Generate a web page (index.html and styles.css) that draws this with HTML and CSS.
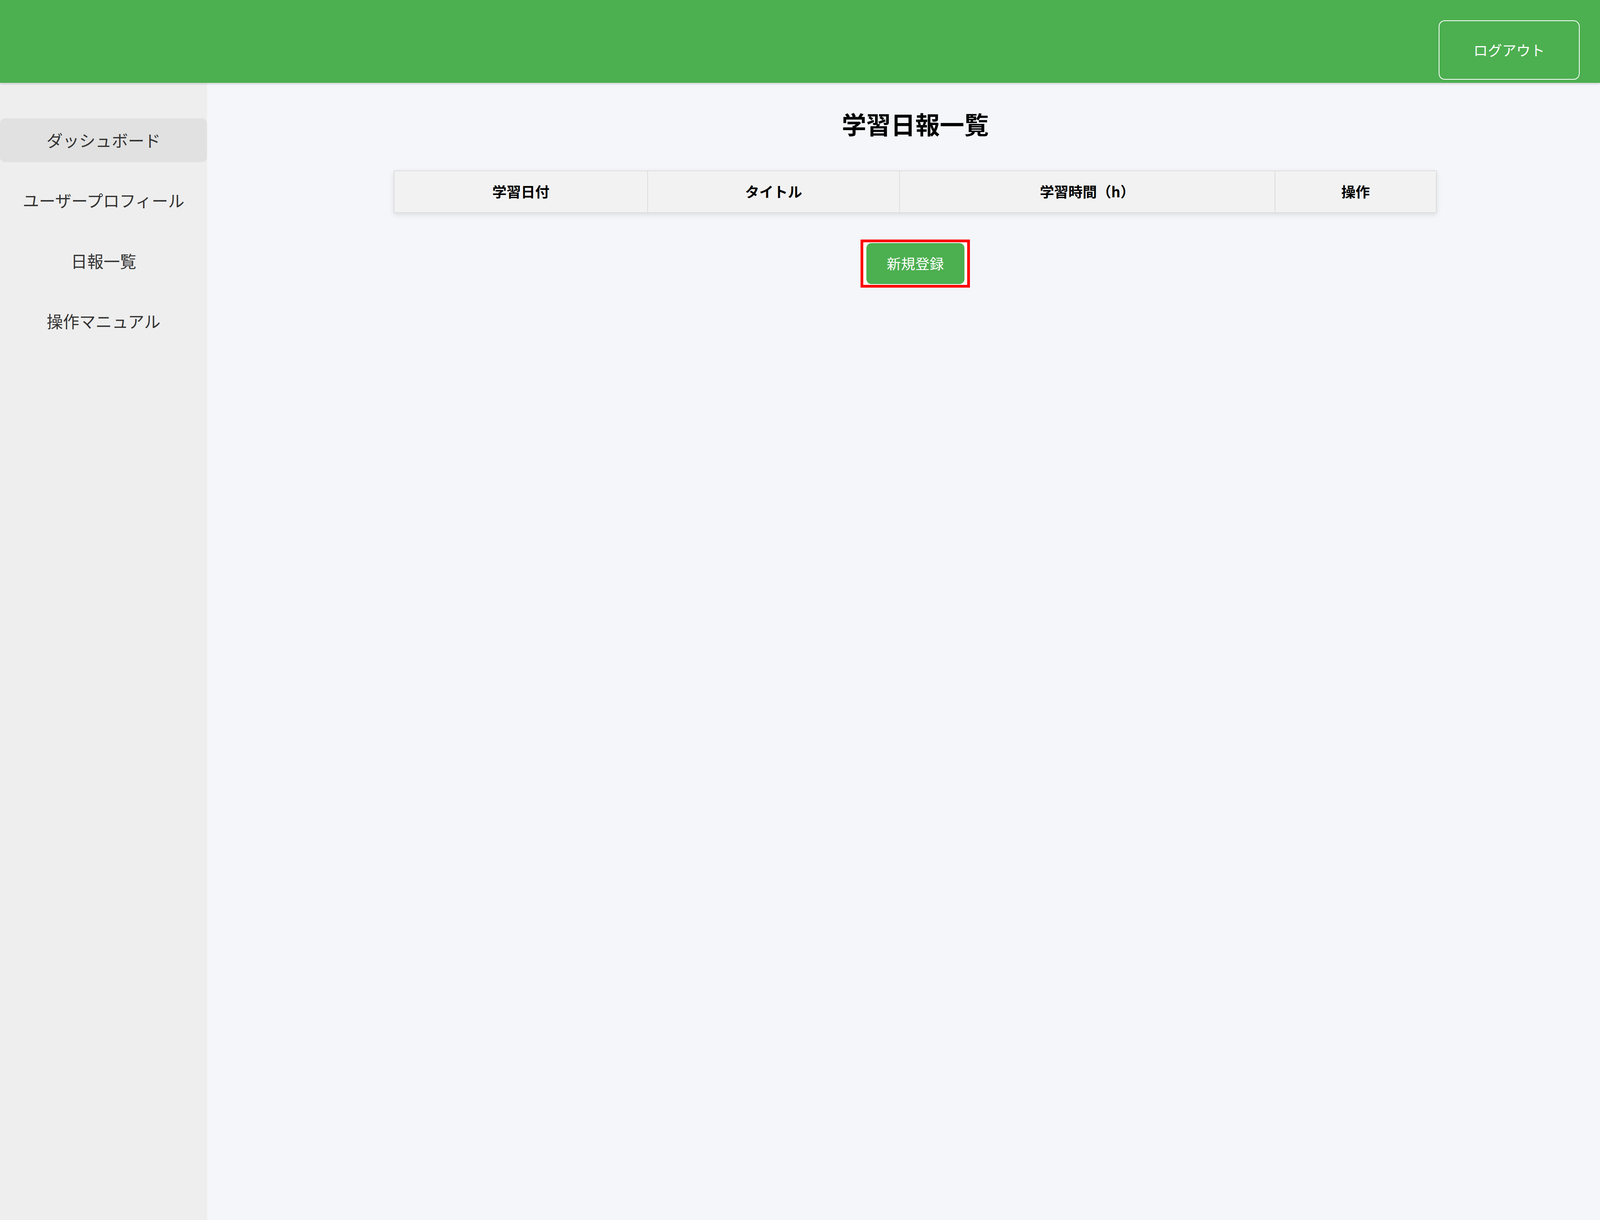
FILE: index.html
```html
<!DOCTYPE html>
<html lang="ja">
<head>
    <meta charset="UTF-8">
    <meta name="viewport" content="width=device-width, initial-scale=1.0">
    <title>学習日報一覧</title>
    <link rel="stylesheet" href="styles.css">
</head>
<body>
    <header class="header">
        <button class="logout-button">ログアウト</button>
    </header>

    <div class="layout">
        <nav class="sidebar">
            <a class="nav-item active" href="#">ダッシュボード</a>
            <a class="nav-item" href="#">ユーザープロフィール</a>
            <a class="nav-item" href="#">日報一覧</a>
            <a class="nav-item" href="#">操作マニュアル</a>
        </nav>

        <main class="main">
            <h1 class="page-title">学習日報一覧</h1>

            <table class="report-table">
                <thead>
                    <tr>
                        <th class="col-date">学習日付</th>
                        <th class="col-title">タイトル</th>
                        <th class="col-hours">学習時間（h）</th>
                        <th class="col-action">操作</th>
                    </tr>
                </thead>
                <tbody></tbody>
            </table>

            <div class="new-entry">
                <span class="highlight-box">
                    <button class="new-button">新規登録</button>
                </span>
            </div>
        </main>
    </div>
</body>
</html>
```

FILE: styles.css
```css
/* 1rem = one pixel of the 1568px wide design */
html {
    font-size: calc(100vw / 1568);
}
body {
    margin: 0;
    min-height: 100vh;
    display: flex;
    flex-direction: column;
    font-family: "Noto Sans CJK JP", "Noto Sans", sans-serif;
    color: #333;
    background-color: #f5f6fa;
}
.header {
    height: 81rem;
    box-sizing: border-box;
    padding: 20rem 20rem 0;
    display: flex;
    justify-content: flex-end;
    align-items: flex-start;
    background-color: #4CAF50;
    box-shadow: 0 1rem 2rem rgba(0, 0, 0, 0.15);
    position: relative;
}
.logout-button {
    width: 138rem;
    height: 58rem;
    padding: 0;
    font-family: inherit;
    font-size: 14rem;
    color: white;
    background-color: transparent;
    border: 1rem solid white;
    border-radius: 6rem;
    cursor: pointer;
}
.layout {
    flex: 1;
    display: flex;
}
.sidebar {
    width: 203rem;
    flex-shrink: 0;
    padding-top: 35rem;
    display: flex;
    flex-direction: column;
    gap: 16rem;
    background-color: #eeeeee;
}
.nav-item {
    display: block;
    padding: 12rem 0;
    line-height: 19rem;
    font-size: 16rem;
    text-align: center;
    color: #333;
    text-decoration: none;
    border-radius: 5rem;
}
.nav-item.active {
    background-color: #e1e1e1;
}
.main {
    flex: 1;
    padding: 22rem 0 20rem 23rem;
    display: flex;
    flex-direction: column;
    align-items: center;
}
.page-title {
    margin: 0 0 28rem;
    font-size: 24rem;
    line-height: 36rem;
    font-weight: bold;
    color: #000;
}
.report-table {
    width: 1022rem;
    border-collapse: collapse;
    box-shadow: 0 2rem 5rem rgba(0, 0, 0, 0.1);
}
.report-table th {
    padding: 10rem;
    line-height: 20rem;
    font-size: 14rem;
    font-weight: bold;
    color: #000;
    background-color: #f2f2f2;
    border: 1rem solid #dddddd;
}
.col-date { width: 24.3%; }
.col-title { width: 24.2%; }
.col-hours { width: 36%; }
.col-action { width: 15.5%; }
.new-entry {
    margin-top: 26rem;
}
.highlight-box {
    display: inline-block;
    padding: 1rem 3rem;
    border: 3rem solid #ff0000;
    background-color: white;
    line-height: 0;
}
.new-button {
    padding: 10rem 20rem;
    line-height: 20rem;
    font-family: inherit;
    font-size: 14rem;
    color: white;
    background-color: #4CAF50;
    border: none;
    border-radius: 5rem;
    cursor: pointer;
}
```
